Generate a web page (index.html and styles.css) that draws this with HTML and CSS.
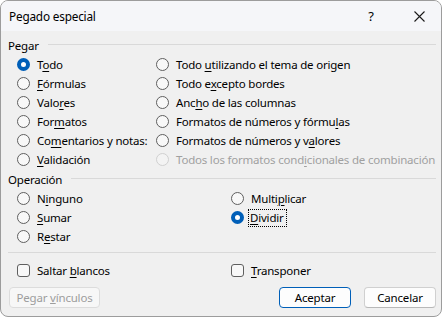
FILE: index.html
```html
<!DOCTYPE html>
<html lang="es">
<head>
<meta charset="utf-8">
<title>Pegado especial</title>
<link rel="stylesheet" href="styles.css">
</head>
<body>
<div class="dlg">
  <div class="titlebar">
    <span class="title">Pegado especial</span>
    <span class="help">?</span>
    <span class="close"><svg width="11" height="11" viewBox="0 0 11 11"><path d="M0.5 0.5 L10.5 10.5 M10.5 0.5 L0.5 10.5" stroke="#1a1a1a" stroke-width="1.1" fill="none"/></svg></span>
  </div>
  <div class="content">
    <div class="group"><span>Pegar</span><div class="rule"></div></div>
    <div class="grid paste">
      <label class="opt"><span class="radio on"></span><span>T<u>o</u>do</span></label>
      <label class="opt"><span class="radio"></span><span><u>F</u>órmulas</span></label>
      <label class="opt"><span class="radio"></span><span>Valo<u>r</u>es</span></label>
      <label class="opt"><span class="radio"></span><span>For<u>m</u>atos</span></label>
      <label class="opt"><span class="radio"></span><span>Co<u>m</u>entarios y notas:</span></label>
      <label class="opt"><span class="radio"></span><span><u>V</u>alidación</span></label>
      <label class="opt"><span class="radio"></span><span>Todo <u>u</u>tilizando el tema de origen</span></label>
      <label class="opt"><span class="radio"></span><span>Todo e<u>x</u>cepto bordes</span></label>
      <label class="opt"><span class="radio"></span><span>Anc<u>h</u>o de las columnas</span></label>
      <label class="opt"><span class="radio"></span><span>Formatos de números y fórmu<u>l</u>as</span></label>
      <label class="opt"><span class="radio"></span><span>Formatos de números y v<u>a</u>lores</span></label>
      <label class="opt disabled"><span class="radio"></span><span>Todos los formatos cond<u>i</u>cionales de combinación</span></label>
    </div>
    <div class="group"><span>Operación</span><div class="rule"></div></div>
    <div class="grid op">
      <label class="opt"><span class="radio"></span><span>N<u>i</u>nguno</span></label>
      <label class="opt"><span class="radio"></span><span><u>S</u>umar</span></label>
      <label class="opt"><span class="radio"></span><span>R<u>e</u>star</span></label>
      <label class="opt"><span class="radio"></span><span>Multi<u>p</u>licar</span></label>
      <label class="opt"><span class="radio on"></span><span class="focus"><u>D</u>ividir</span></label>
      <span></span>
    </div>
    <div class="sep"></div>
    <div class="grid checks">
      <label class="opt"><span class="check"></span><span>Saltar <u>b</u>lancos</span></label>
      <label class="opt"><span class="check"></span><span><u>T</u>ransponer</span></label>
    </div>
    <div class="buttons">
      <button class="btn disabled">Pegar <u>v</u>ínculos</button>
      <span class="spacer"></span>
      <button class="btn primary">Aceptar</button>
      <button class="btn">Cancelar</button>
    </div>
  </div>
</div>
</body>
</html>
```

FILE: styles.css
```css
html, body {
  margin: 0;
  padding: 0;
  background: #ffffff;
}
body {
  width: 443px;
  height: 318px;
  overflow: hidden;
  font-family: "Noto Sans", "Open Sans", sans-serif;
  font-size: 11.5px;
  letter-spacing: -0.2px;
  color: #000;
}
.dlg {
  box-sizing: border-box;
  width: 442px;
  height: 317px;
  border: 1px solid #9c9c9c;
  border-radius: 8px;
  background: #f0f0f0;
  overflow: hidden;
}
.titlebar {
  height: 30px;
  background: #f5f6f9;
  display: flex;
  align-items: center;
  padding-left: 8px;
}
.title {
  flex: 1;
  font-size: 11.8px;
}
.help {
  width: 14px;
  text-align: center;
  margin-right: 36px;
  font-size: 13px;
}
.close {
  display: flex;
  margin-right: 16px;
}
.content {
  padding: 0 5px 0 7px;
}
.group {
  display: flex;
  align-items: center;
  height: 18px;
  gap: 9px;
}
.group:first-child {
  margin-top: 5px;
}
.group .rule {
  flex: 1;
  height: 1px;
  background: #d9d9d9;
  margin-top: -2px;
}
.grid {
  display: grid;
  grid-auto-flow: column;
  padding-left: 9px;
}
.paste {
  grid-template-rows: repeat(6, 19px);
  grid-template-columns: 139px 1fr;
  margin-top: 1px;
  margin-bottom: 1px;
}
.op {
  grid-template-rows: repeat(3, 19px);
  grid-template-columns: 214px 1fr;
  margin-top: 1px;
}
.sep {
  height: 1px;
  background: #d9d9d9;
  margin: 6px 0 8px 0;
}
.checks {
  grid-template-rows: 19px;
  grid-template-columns: 214px 1fr;
}
.opt {
  display: flex;
  align-items: center;
  gap: 7px;
  white-space: nowrap;
}
.opt u {
  text-decoration-thickness: 1px;
  text-underline-offset: 2px;
}
.radio {
  box-sizing: border-box;
  width: 13px;
  height: 13px;
  border-radius: 50%;
  border: 1px solid #5f5f5f;
  background: #f8f8f8;
  flex: none;
}
.radio.on {
  border: 4px solid #005fb8;
  background: #ffffff;
}
.disabled .radio {
  border-color: #d0d0d0;
  background: #f3f3f3;
}
.opt.disabled {
  color: #a0a0a0;
}
.check {
  box-sizing: border-box;
  width: 13px;
  height: 13px;
  border-radius: 3px;
  border: 1px solid #5f5f5f;
  background: #f8f8f8;
  flex: none;
}
.focus {
  outline: 1px dotted #000;
  outline-offset: 0;
  padding: 0 2px 1px 1px;
  margin-left: -2px;
}
.buttons {
  display: flex;
  align-items: center;
  margin-top: 7px;
  padding-left: 1px;
}
.spacer {
  flex: 1;
}
.btn {
  box-sizing: border-box;
  height: 21px;
  font-family: inherit;
  font-size: 11.5px;
  letter-spacing: -0.2px;
  color: #000;
  background: #fdfdfd;
  border: 1px solid #d0d0d0;
  border-bottom-color: #b8b8b8;
  border-radius: 4px;
  padding: 0;
  line-height: 18px;
}
.btn.disabled {
  width: 91px;
  color: #9d9d9d;
  background: #f7f7f7;
  border-color: #dcdcdc;
}
.btn.primary {
  width: 72px;
  border: 1px solid #005fb8;
  margin-right: 13px;
}
.btn:last-child {
  width: 72px;
}
```
